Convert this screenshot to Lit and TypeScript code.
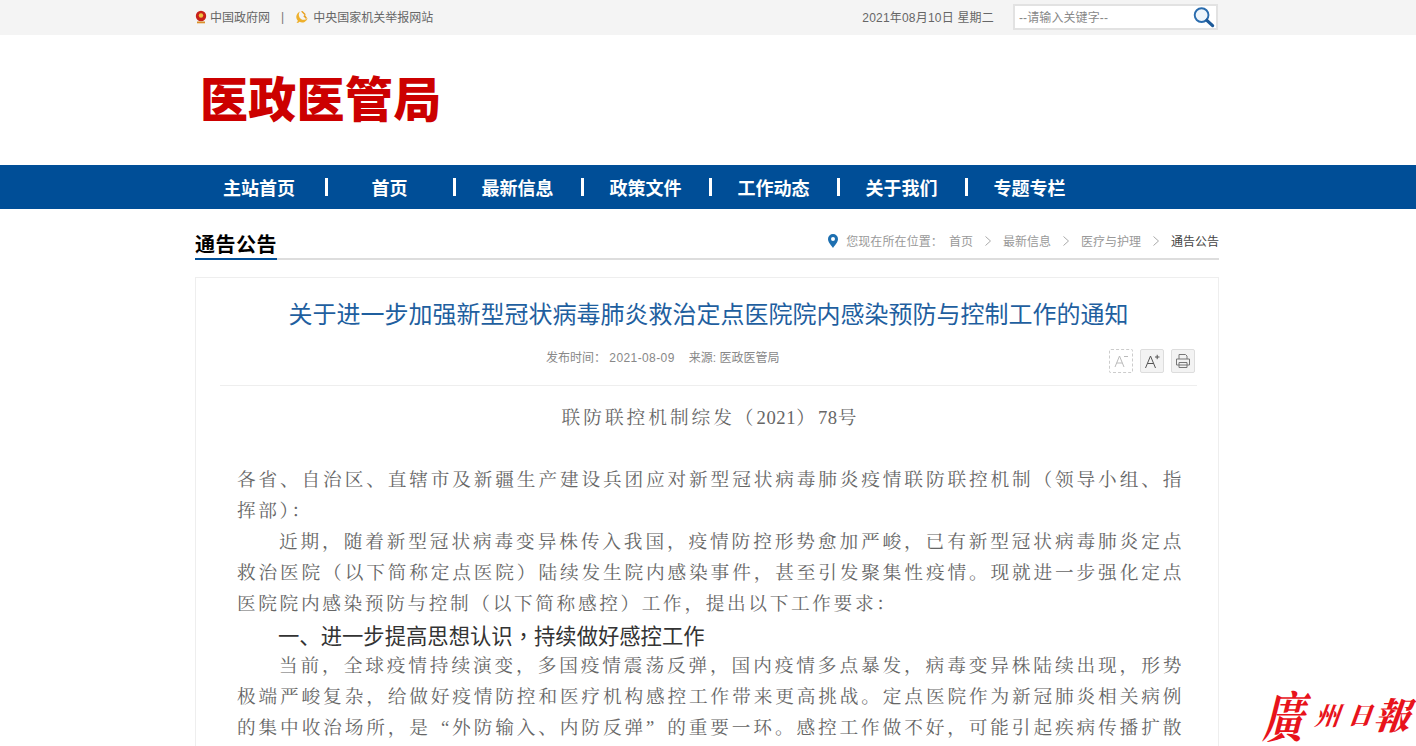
import { LitElement, html, css } from "lit";
import { customElement } from "lit/decorators.js";

const chevron = html`<svg class="chev" width="8" height="12" viewBox="0 0 8 12"><path d="M1.5 1.5 6.5 6 1.5 10.5" fill="none" stroke="#aaa" stroke-width="1"/></svg>`;

@customElement("app-root")
export class AppRoot extends LitElement {
  static styles = css`
    :host { display: block; height: 100vh; overflow: hidden; position: relative; background: #fff;
      font-family: "Liberation Sans", "Noto Sans CJK SC", sans-serif; font-size: 12px; color: #666; }
    .wrap { width: 1024px; margin-left: 195px; }
    .top { background: #f4f4f4; height: 35px; }
    .top .wrap { display: flex; align-items: center; justify-content: space-between; height: 33px; }
    .links, .rt { display: flex; align-items: center; }
    .links svg { margin-right: 3px; }
    .pipe { margin: 0 11px 0 11px; color: #777; }
    .date { margin-right: 19px; letter-spacing: 0.2px; }
    .search { width: 196px; height: 22px; border: 2px solid #e2e2e2; background: #fff; display: flex; align-items: center;
      justify-content: space-between; padding: 0 1px 0 4px; margin-right: 1px; color: #888; letter-spacing: 0.1px; }
    .brand { height: 130px; display: flex; align-items: center; }
    .brand h1 { margin: 0 0 0 5px; font-size: 48px; line-height: 60px; font-weight: 900; color: #cc0000; position: relative; top: 1px; letter-spacing: 0.3px; }
    nav { background: #004e97; height: 44px; }
    nav .wrap { display: grid; grid-template-columns: repeat(7, 128px); height: 44px; }
    .cell { display: flex; align-items: center; color: #fff; font-size: 18px; font-weight: 700; }
    .cell i { width: 3px; height: 18px; background: #fff; margin-left: 2px; flex: none; }
    .cell b { flex: 1; text-align: center; font-weight: 700; }
    .crumbhead { display: flex; justify-content: space-between; align-items: flex-end; height: 50px; margin-top: 1px;
      border-bottom: 2px solid #ddd; box-sizing: border-box; }
    .crumbhead h2 { margin: 0 0 -2px; font-size: 20px; line-height: 25px; font-weight: 700; color: #000; width: 82px; height: 25px;
      letter-spacing: 0.5px; white-space: nowrap; border-bottom: 2px solid #004e97; }
    .crumbs { display: flex; align-items: center; color: #999; margin-bottom: 9px; }
    .crumbs svg.pin { margin-right: 8px; }
    .crumbs .chev { margin: 0 11px; }
    .crumbs .here { color: #444; }
    .crumbs .loc { margin-right: 6px; letter-spacing: 0.1px; }
    .card { margin-top: 17px; border: 1px solid #eee; padding-top: 19px; height: 700px; box-sizing: border-box; }
    .card h3 { margin: 0; padding-left: 3px; text-align: center; font-size: 24px; line-height: 36px; font-weight: 400; color: #1f5f9f; }
    .meta { margin: 16px 21px 0 24px; padding: 0 2px 12px 326px; display: flex; justify-content: space-between; align-items: flex-start;
      border-bottom: 1px solid #eee; color: #888; }
    .meta span.t { margin-top: 1px; line-height: 16px; }
    .meta .d { letter-spacing: 0.4px; margin-right: 14px; }
    .tools { display: flex; gap: 7px; }
    .tool { width: 22px; height: 22px; border: 1px solid #ddd; background: #f3f3f3; border-radius: 2px; display: flex; align-items: center; justify-content: center; }
    .tool.off { background: #fff; border: 1px dashed #ccc; }
    .doc { font-family: "Liberation Serif", "Noto Serif CJK SC", "Noto Sans CJK SC", serif; color: #666; font-size: 18.67px; line-height: 31px; letter-spacing: 2.65px; }
    .num { text-align: center; margin: 16px 0 31px; padding-left: 7px; letter-spacing: 3px; }
    .num span { letter-spacing: 0.6px; }
    .body { margin-left: 41px; width: 947px; }
    .body p { margin: 0; text-align: justify; }
    .body p.in { text-indent: 42px; }
    .body p.end { text-align-last: justify; }
    .qo { margin-left: 10px; }
    .qc { margin-right: 10px; }
    .body p.hd { font-family: "Noto Sans CJK SC", sans-serif; font-size: 21.33px; letter-spacing: 0; color: #333; text-indent: 41px; line-height: 31px; }
    .hd .c { font-family: "Noto Sans CJK TC", sans-serif; }
    .mark { position: absolute; right: 0; bottom: 4px; width: 148px; height: 56px; color: #e8131b; white-space: nowrap; display: flex; align-items: center; font-family: "Noto Serif CJK TC", "Noto Sans CJK TC", serif; }
    .mark span { display: block; transform: skewX(-20deg); line-height: 56px; }
    .mark .a { font-size: 40px; width: 50px; font-weight: 700; transform: skewX(-14deg) scaleY(1.35); }
    .mark .b { font-size: 25px; width: 33px; font-weight: 700; }
    .mark .c { font-size: 24px; width: 27px; font-weight: 900; }
    .mark .d { font-size: 36px; width: 36px; font-weight: 900; }
  `;

  render() {
    const nav = ["主站首页", "首页", "最新信息", "政策文件", "工作动态", "关于我们", "专题专栏"];
    return html`
      <div class="top"><div class="wrap">
        <div class="links">
          <svg width="12" height="14" viewBox="0 0 12 14"><circle cx="6" cy="6" r="5.2" fill="#c8201a"/><circle cx="6" cy="5.5" r="2.2" fill="#f0c040"/><path d="M2 11.500h8v1.800H2z" fill="#d9902a"/></svg>
          <span>中国政府网</span><span class="pipe">|</span>
          <svg width="14" height="14" viewBox="0 0 14 14" style="margin-right:4px"><path d="M5 1.500A5.800 5.800 0 0 0 3 11L1.500 12.500 3 13l1.500-1.200A5.800 5.800 0 0 0 12.800 8 5 5 0 0 1 5 1.500z" fill="#eeb02c"/><path d="M6 1.500 9.500 5 8.300 6.200 11 9l1-1-2-3 .8-.8L7.500 1z" fill="#e8a020"/></svg>
          <span>中央国家机关举报网站</span>
        </div>
        <div class="rt">
          <span class="date">2021年08月10日 星期二</span>
          <div class="search"><span>--请输入关键字--</span>
            <svg width="23" height="22" viewBox="0 0 23 23"><circle cx="9.500" cy="9.500" r="7.200" fill="#eef5fb" stroke="#2a6cae" stroke-width="2"/><path d="M15 15 21 20.500" stroke="#1d5a99" stroke-width="3.400" stroke-linecap="round"/></svg>
          </div>
        </div>
      </div></div>

      <div class="wrap brand"><h1>医政医管局</h1></div>

      <nav><div class="wrap">
        ${nav.map((n, i) => html`<div class="cell">${i ? html`<i></i>` : ""}<b>${n}</b></div>`)}
      </div></nav>

      <div class="wrap">
        <div class="crumbhead">
          <h2>通告公告</h2>
          <div class="crumbs">
            <svg class="pin" width="10" height="14" viewBox="0 0 10 14"><path fill-rule="evenodd" d="M5 0a5 5 0 0 1 5 5c0 3.200-3.400 6.800-5 9-1.600-2.200-5-5.800-5-9a5 5 0 0 1 5-5zm0 3a2 2 0 1 0 0 4 2 2 0 0 0 0-4z" fill="#1d6fb0"/></svg>
            <span class="loc">您现在所在位置：</span><span>首页</span>${chevron}<span>最新信息</span>${chevron}<span>医疗与护理</span>${chevron}<span class="here">通告公告</span>
          </div>
        </div>

        <div class="card">
          <h3>关于进一步加强新型冠状病毒肺炎救治定点医院院内感染预防与控制工作的通知</h3>
          <div class="meta">
            <span class="t">发布时间： <span class="d">2021-08-09</span>来源: 医政医管局</span>
            <div class="tools">
              <div class="tool off"><svg width="16" height="16" viewBox="0 0 16 16"><path d="M2 14 6.500 3 11 14M3.800 10h5.400" fill="none" stroke="#bbb"/><path d="M11 3.500h4" stroke="#bbb"/></svg></div>
              <div class="tool"><svg width="16" height="16" viewBox="0 0 16 16"><path d="M1.500 15 6.500 3 11.500 15M3.500 10.500h6" fill="none" stroke="#555"/><path d="M11 4h4.500M13.200 1.800v4.400" stroke="#555"/></svg></div>
              <div class="tool"><svg width="16" height="16" viewBox="0 0 16 16"><g fill="none" stroke="#777"><path d="M4 6V1.500h6.500L12 3v3M1.500 6h13v6h-13zM4 9.500h8v5H4z"/></g></svg></div>
            </div>
          </div>
          <div class="doc">
            <div class="num">联防联控机制综发（<span>2021</span>）<span>78</span>号</div>
            <div class="body">
              <p>各省、自治区、直辖市及新疆生产建设兵团应对新型冠状病毒肺炎疫情联防联控机制（领导小组、指挥部）：</p>
              <p class="in">近期，随着新型冠状病毒变异株传入我国，疫情防控形势愈加严峻，已有新型冠状病毒肺炎定点救治医院（以下简称定点医院）陆续发生院内感染事件，甚至引发聚集性疫情。现就进一步强化定点医院院内感染预防与控制（以下简称感控）工作，提出以下工作要求：</p>
              <p class="hd">一、进一步提高思想认识<span class="c">，</span>持续做好感控工作</p>
              <p class="in end">当前，全球疫情持续演变，多国疫情震荡反弹，国内疫情多点暴发，病毒变异株陆续出现，形势极端严峻复杂，给做好疫情防控和医疗机构感控工作带来更高挑战。定点医院作为新冠肺炎相关病例的集中收治场所，是<span class="qo">“</span>外防输入、内防反弹<span class="qc">”</span>的重要一环。感控工作做不好，可能引起疾病传播扩散</p>
            </div>
          </div>
        </div>
      </div>

      <div class="mark"><span class="a">廣</span><span class="b">州</span><span class="c">日</span><span class="d">報</span></div>
    `;
  }
}
